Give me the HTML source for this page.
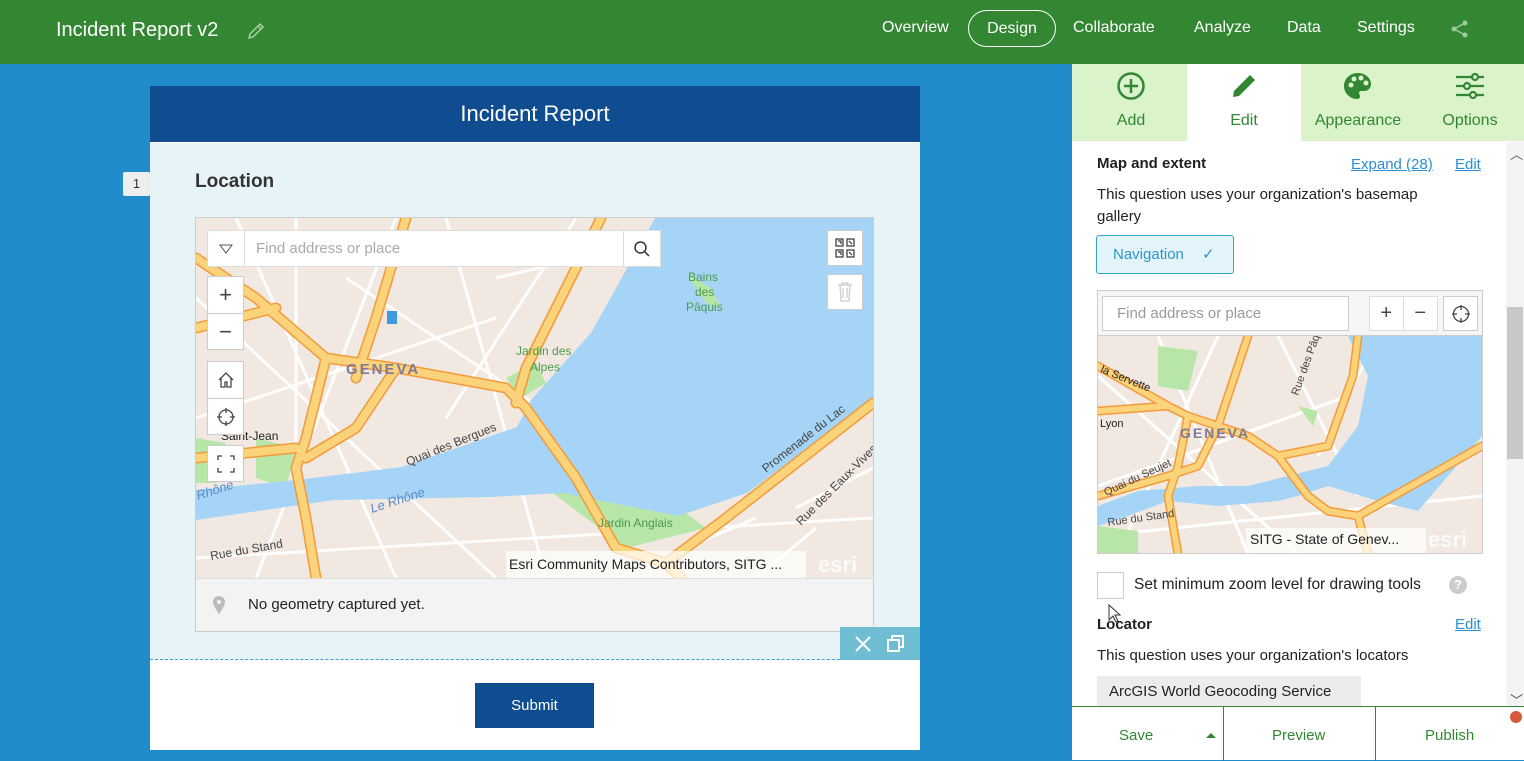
<!DOCTYPE html>
<html><head><meta charset="utf-8">
<style>
*{box-sizing:border-box;margin:0;padding:0}
body{width:1524px;height:760px;overflow:hidden;font-family:"Liberation Sans",sans-serif;background:#208cca;position:relative}
.abs{position:absolute}
.top{left:0;top:0;width:1524px;height:64px;background:#338732;color:#fff}
.nav{font-size:16px;top:19px;color:#fff}
.card{left:150px;top:86px;width:770px;height:664px;background:#fff}
.fh{left:0;top:0;width:770px;height:56px;background:#0f4c90;color:#fff;font-size:22px;text-align:center;line-height:56px}
.fb{left:0;top:57px;width:770px;height:517px;background:#e7f4f7;border-bottom:1px dashed #3aa0d0}
.btn{background:#fff;border:1px solid #ccc;width:37px;height:37px;display:flex;align-items:center;justify-content:center}
.panel{left:1072px;top:64px;width:452px;height:696px;background:#fff}
.tab{top:0;height:77px;width:114px;text-align:center;color:#338732;font-size:16px}
.tab span{position:absolute;left:0;right:0;top:48px}
.lnk{color:#2b8ed0;text-decoration:underline;font-size:15px}
.t15{font-size:15px;color:#222}
</style></head><body>
<div class="abs top">
 <div class="abs" style="left:56px;top:19px;font-size:20px">Incident Report v2</div>
 <svg class="abs" style="left:246px;top:21px" width="20" height="20" viewBox="0 0 20 20"><path d="M3 17l1-4L14 3l3 3L7 16z M12 5l3 3" fill="none" stroke="#a8cfa8" stroke-width="1.5"/></svg>
 <div class="abs nav" style="left:882px">Overview</div>
 <div class="abs" style="left:968px;top:10px;width:88px;height:37px;border:1px solid #fff;border-radius:19px;text-align:center;line-height:35px;font-size:16px">Design</div>
 <div class="abs nav" style="left:1073px">Collaborate</div>
 <div class="abs nav" style="left:1194px">Analyze</div>
 <div class="abs nav" style="left:1287px">Data</div>
 <div class="abs nav" style="left:1357px">Settings</div>
 <svg class="abs" style="left:1450px;top:19px" width="20" height="20" viewBox="0 0 20 20" fill="#9fc99f"><circle cx="15" cy="4" r="2.5"/><circle cx="4" cy="10" r="2.5"/><circle cx="15" cy="16" r="2.5"/><path d="M4 10L15 4M4 10l11 6" stroke="#9fc99f" stroke-width="1.5"/></svg>
</div>

<div class="abs" style="left:123px;top:172px;width:27px;height:24px;background:#eee;border-radius:2px;font-size:13px;text-align:center;line-height:24px;color:#333">1</div>
<div class="abs card">
 <div class="abs fh">Incident Report</div>
 <div class="abs fb">
  <div class="abs" style="left:45px;top:28px;font-size:19px;color:#333;font-weight:bold">Location</div>
  <div class="abs" style="left:45px;top:74px;width:679px;height:415px;border:1px solid #ccc;background:#f5f5f5">
   <svg class="abs" style="left:0;top:0" width="677" height="360" viewBox="0 0 677 360">
    <rect width="677" height="360" fill="#f1e9e1"/>
    <g stroke="#fff" stroke-width="3" fill="none" opacity=".9">
     <path d="M0 80L300 360M40 0L200 360M100 0L100 250M150 60L450 260M250 0L350 360M0 200L300 100M200 0L60 360M380 0L250 200M0 340L677 300M500 0L420 150M560 300L420 360M600 290L677 250M620 310L560 360M300 60L470 20"/>
    </g>
    <path d="M310 160l30 -15 10 20-25 15z M480 60l20 10-20 15zM0 220l30 5-10 40-20 0zM60 220l40 10-10 40-30-10zM350 270l120 10 40 30-80 20z" fill="#b8e6a8"/>
    <path d="M459 0L677 0 677 182 551 275 482 298 367 275 294 279 138 282 0 302 0 272 100 262 206 249 321 209 335 182 395 115z" fill="#a5d4f7"/>
    <path d="M490 55l25 15 10 20-15-5z" fill="#b8e6a8"/>
    <g fill="none" stroke-linecap="round" stroke-linejoin="round">
     <g stroke="#f39a3a" stroke-width="11"><path d="M0 40L60 80 130 140 200 150 310 170 330 190 380 260 420 330 470 345 530 300 677 185"/><path d="M130 140L110 220 100 250 110 300 120 360"/><path d="M200 150L160 210 110 240"/><path d="M0 240L100 230"/><path d="M210 0L180 100 160 160"/><path d="M405 0L330 150 320 185"/><path d="M470 345L485 360"/><path d="M0 110L80 90"/></g>
     <g stroke="#fbd37a" stroke-width="8"><path d="M0 40L60 80 130 140 200 150 310 170 330 190 380 260 420 330 470 345 530 300 677 185"/><path d="M130 140L110 220 100 250 110 300 120 360"/><path d="M200 150L160 210 110 240"/><path d="M0 240L100 230"/><path d="M210 0L180 100 160 160"/><path d="M405 0L330 150 320 185"/><path d="M470 345L485 360"/><path d="M0 110L80 90"/></g>
    </g>
    <text x="150" y="156" font-family="Liberation Sans" font-weight="bold" font-size="15" fill="#7f7a96" letter-spacing="2">GENEVA</text>
    <text x="320" y="137" font-family="Liberation Sans" font-size="12" fill="#4c9a4c">Jardin des</text>
    <text x="334" y="153" font-family="Liberation Sans" font-size="12" fill="#4c9a4c">Alpes</text>
    <text x="492" y="63" font-family="Liberation Sans" font-size="12" fill="#4c9a4c">Bains</text>
    <text x="499" y="78" font-family="Liberation Sans" font-size="12" fill="#4c9a4c">des</text>
    <text x="490" y="93" font-family="Liberation Sans" font-size="12" fill="#4c9a4c">Pâquis</text>
    <text x="402" y="309" font-family="Liberation Sans" font-size="12" fill="#4c9a4c">Jardin Anglais</text>
    <text x="0" y="0" font-family="Liberation Sans" font-size="12" fill="#444" transform="translate(212 248) rotate(-22)">Quai des Bergues</text>
    <text x="0" y="0" font-family="Liberation Sans" font-size="12" fill="#444" transform="translate(570 255) rotate(-38)">Promenade du Lac</text>
    <text x="0" y="0" font-family="Liberation Sans" font-size="12" fill="#444" transform="translate(605 308) rotate(-45)">Rue des Eaux-Vives</text>
    <text x="0" y="0" font-family="Liberation Sans" font-size="13" fill="#5a8bc8" font-style="italic" transform="translate(176 295) rotate(-18)">Le Rhône</text>
    <text x="0" y="0" font-family="Liberation Sans" font-size="13" fill="#5a8bc8" font-style="italic" transform="translate(2 282) rotate(-18)">Rhône</text>
    <text x="0" y="0" font-family="Liberation Sans" font-size="12" fill="#444" transform="translate(15 342) rotate(-10)">Rue du Stand</text>
    <text x="25" y="222" font-family="Liberation Sans" font-size="12" fill="#222">Saint-Jean</text>
    <rect x="191" y="93" width="10" height="13" fill="#3b9ae0"/>
    <rect x="310" y="333" width="300" height="27" fill="#fff" opacity=".7"/>
    <text x="313" y="351" font-family="Liberation Sans" font-size="14" fill="#222">Esri Community Maps Contributors, SITG ...</text>
    <text x="622" y="354" font-family="Liberation Sans" font-weight="bold" font-size="22" fill="#fff" opacity=".8">esri</text>
   </svg>
   <div class="abs" style="left:11px;top:12px;width:454px;height:37px;background:#fff;border:1px solid #ddd;display:flex">
    <div style="width:37px;border-right:1px solid #ddd;display:flex;align-items:center;justify-content:center"><svg width="14" height="10"><path d="M1 1h12L7 9z" fill="none" stroke="#555"/></svg></div>
    <div style="flex:1;color:#aaa;font-size:15px;padding:9px 11px">Find address or place</div>
    <div style="width:37px;border-left:1px solid #ddd;display:flex;align-items:center;justify-content:center"><svg width="18" height="18"><circle cx="7.5" cy="7.5" r="5.5" fill="none" stroke="#333" stroke-width="1.5"/><path d="M11.5 11.5L16 16" stroke="#333" stroke-width="1.5"/></svg></div>
   </div>
   <div class="abs btn" style="left:11px;top:58px;border-bottom:none;font-size:22px;color:#444">+</div>
   <div class="abs btn" style="left:11px;top:95px;font-size:22px;color:#444">−</div>
   <div class="abs btn" style="left:11px;top:143px;border-bottom:none"><svg width="20" height="20"><path d="M3 10L10 3l7 7M5 8v9h4v-5h2v5h4V8" fill="none" stroke="#444" stroke-width="1.3"/></svg></div>
   <div class="abs btn" style="left:11px;top:180px"><svg width="20" height="20"><circle cx="10" cy="10" r="7" fill="none" stroke="#444" stroke-width="1.3"/><path d="M10 1v5M10 14v5M1 10h5M14 10h5" stroke="#444" stroke-width="1.3"/></svg></div>
   <div class="abs btn" style="left:11px;top:227px"><svg width="18" height="18"><path d="M1 5V1h4M13 1h4v4M17 13v4h-4M5 17H1v-4" fill="none" stroke="#444" stroke-width="1.3"/></svg></div>
   <div class="abs btn" style="left:631px;top:12px;width:36px;height:36px"><svg width="20" height="20" fill="none" stroke="#333" stroke-width="1.2"><rect x="1" y="1" width="7" height="7"/><rect x="12" y="1" width="7" height="7"/><rect x="1" y="12" width="7" height="7"/><rect x="12" y="12" width="7" height="7"/><path d="M3 3h3v3M14 14l3 3M14 3l3 3M3 14h3v3"/></svg></div>
   <div class="abs btn" style="left:631px;top:56px;width:36px;height:36px"><svg width="16" height="20" fill="none" stroke="#ccc" stroke-width="1.3"><path d="M1 3h14M5 3V1h6v2M3 3l1 16h8l1-16M6 6v10M10 6v10"/></svg></div>
   <div class="abs" style="left:0;top:360px;width:677px;height:53px;border-top:1px solid #ddd;background:#f3f3f3">
    <svg class="abs" style="left:16px;top:16px" width="14" height="20"><path d="M7 1a6 6 0 0 1 6 6c0 4-6 12-6 12S1 11 1 7a6 6 0 0 1 6-6z" fill="#bbb"/><circle cx="7" cy="7" r="2" fill="#f3f3f3"/></svg>
    <div class="abs" style="left:52px;top:17px;font-size:15px;color:#222">No geometry captured yet.</div>
   </div>
  </div>
  <div class="abs" style="left:690px;top:484px;width:80px;height:33px;background:#6fbdd2">
   <svg class="abs" style="left:14px;top:8px" width="18" height="18"><path d="M2 2l14 14M16 2L2 16" stroke="#fff" stroke-width="2"/></svg>
   <svg class="abs" style="left:46px;top:7px" width="20" height="20" fill="none" stroke="#fff" stroke-width="2"><rect x="2" y="6" width="11" height="11"/><path d="M6 6V2h11v11h-4"/></svg>
  </div>
 </div>
 <div class="abs" style="left:325px;top:597px;width:119px;height:45px;background:#0f4c90;color:#fff;font-size:15px;text-align:center;line-height:45px">Submit</div>
</div>

<div class="abs panel">
 <div class="abs" style="left:0;top:0;width:452px;height:77px;background:#daf3cb"></div>
 <div class="abs tab" style="left:2px"><svg class="abs" style="left:42px;top:7px" width="30" height="30"><circle cx="15" cy="15" r="12.5" fill="none" stroke="#338732" stroke-width="2.5"/><path d="M15 8v14M8 15h14" stroke="#338732" stroke-width="2.5"/></svg><span>Add</span></div>
 <div class="abs tab" style="left:115px;background:#fff"><svg class="abs" style="left:41px;top:6px" width="32" height="32"><path d="M5 27l1-6L22 5l5 5-16 16z" fill="#338732"/></svg><span>Edit</span></div>
 <div class="abs tab" style="left:229px"><svg class="abs" style="left:42px;top:7px" width="30" height="30"><path d="M15 2C7 2 1 8 1 15s6 13 13 13c2 0 3-1 3-3 0-1-1-2-1-3s1-2 2-2h3c4 0 7-3 7-7C28 7 22 2 15 2z" fill="#338732"/><circle cx="8" cy="14" r="2.5" fill="#daf3cb"/><circle cx="11" cy="8" r="2.5" fill="#daf3cb"/><circle cx="18" cy="7" r="2.5" fill="#daf3cb"/><circle cx="23" cy="12" r="2.5" fill="#daf3cb"/></svg><span>Appearance</span></div>
 <div class="abs tab" style="left:341px"><svg class="abs" style="left:42px;top:8px" width="30" height="28" fill="none" stroke="#338732" stroke-width="2.2"><path d="M1 5h28M1 14h28M1 23h28"/><circle cx="20" cy="5" r="3" fill="#daf3cb"/><circle cx="12" cy="14" r="3" fill="#daf3cb"/><circle cx="18" cy="23" r="3" fill="#daf3cb"/></svg><span>Options</span></div>

 <div class="abs" style="left:25px;top:91px;font-size:15px;font-weight:bold;color:#222">Map and extent</div>
 <div class="abs lnk" style="left:279px;top:92px">Expand (28)</div>
 <div class="abs lnk" style="left:383px;top:92px">Edit</div>
 <div class="abs t15" style="left:25px;top:120px;line-height:22px;width:345px">This question uses your organization's basemap gallery</div>
 <div class="abs" style="left:24px;top:171px;width:138px;height:39px;border:1px solid #3aa0cd;border-radius:3px;background:#e3f5fb;color:#2f95c8;font-size:15px;line-height:37px;padding-left:16px">Navigation <span style="margin-left:14px">✓</span></div>

 <div class="abs" style="left:25px;top:226px;width:386px;height:264px;border:1px solid #ccc;background:#fff;overflow:hidden">
  <svg class="abs" style="left:0;top:45px" width="384" height="218" viewBox="0 0 384 218">
   <rect width="384" height="218" fill="#f1e9e1"/>
   <g stroke="#fff" stroke-width="3" fill="none"><path d="M0 40L200 218M60 0L150 218M120 0L20 218M0 150L250 60M180 0L260 160M0 200L384 160M280 0L220 120"/></g>
   <path d="M60 10l40 5-10 40-30-5zM200 70l20 5-5 15zM0 190l40 5 0 23-40 0z" fill="#b8e6a8"/>
   <path d="M250 0L384 0 384 100 320 175 280 165 230 150 200 160 180 165 120 170 70 165 30 180 0 190 0 170 40 155 100 150 150 150 190 140 230 130 260 90 270 40z" fill="#a5d4f7"/>
   <g fill="none" stroke-linecap="round" stroke-linejoin="round">
    <g stroke="#f39a3a" stroke-width="9"><path d="M0 30L70 70 90 80 120 90 150 100 180 120 210 160 230 175 260 180 384 110"/><path d="M90 80L80 130 70 160 80 218"/><path d="M120 90L100 130 70 140 0 160"/><path d="M150 0L130 60 120 90"/><path d="M260 0L255 40 230 110 180 120"/><path d="M0 75L70 70"/><path d="M260 180l10 38"/></g>
    <g stroke="#fbd37a" stroke-width="6"><path d="M0 30L70 70 90 80 120 90 150 100 180 120 210 160 230 175 260 180 384 110"/><path d="M90 80L80 130 70 160 80 218"/><path d="M120 90L100 130 70 140 0 160"/><path d="M150 0L130 60 120 90"/><path d="M260 0L255 40 230 110 180 120"/><path d="M0 75L70 70"/><path d="M260 180l10 38"/></g>
   </g>
   <text x="82" y="102" font-family="Liberation Sans" font-weight="bold" font-size="14" fill="#7f7a96" letter-spacing="2">GENEVA</text>
   <text x="2" y="91" font-family="Liberation Sans" font-size="11" fill="#222">Lyon</text>
   <text x="0" y="0" font-family="Liberation Sans" font-size="11" fill="#222" transform="translate(2 36) rotate(22)">la Servette</text>
   <text x="0" y="0" font-family="Liberation Sans" font-size="11" fill="#444" transform="translate(10 190) rotate(-8)">Rue du Stand</text>
   <text x="0" y="0" font-family="Liberation Sans" font-size="11" fill="#444" transform="translate(8 160) rotate(-25)">Quai du Seujet</text>
   <text x="0" y="0" font-family="Liberation Sans" font-size="11" fill="#444" transform="translate(200 60) rotate(-70)">Rue des Pâquis</text>
   <rect x="148" y="192" width="180" height="26" fill="#fff" opacity=".7"/>
   <text x="152" y="208" font-family="Liberation Sans" font-size="14" fill="#222">SITG - State of Genev...</text>
   <text x="330" y="211" font-family="Liberation Sans" font-weight="bold" font-size="22" fill="#fff" opacity=".8">esri</text>
  </svg>
  <div class="abs" style="left:0;top:0;width:384px;height:45px;background:#f6f6f6;border-bottom:1px solid #ccc"></div>
  <div class="abs" style="left:4px;top:5px;width:247px;height:35px;background:#fff;border:1px solid #ccc;color:#999;font-size:15px;padding:8px 14px">Find address or place</div>
  <div class="abs" style="left:271px;top:5px;width:69px;height:35px;background:#fff;border:1px solid #ddd;display:flex;font-size:20px;color:#444"><div style="width:34px;text-align:center;line-height:33px;border-right:1px solid #ddd">+</div><div style="width:34px;text-align:center;line-height:33px">−</div></div>
  <div class="abs" style="left:345px;top:5px;width:35px;height:35px;background:#fff;border:1px solid #ccc"><svg class="abs" style="left:7px;top:7px" width="20" height="20"><circle cx="10" cy="10" r="7.5" fill="none" stroke="#444" stroke-width="1.3"/><path d="M10 1v5M10 14v5M1 10h5M14 10h5" stroke="#444" stroke-width="1.3"/></svg></div>
 </div>

 <div class="abs" style="left:25px;top:508px;width:27px;height:27px;border:1px solid #ccc;background:#fff"></div>
 <div class="abs t15" style="left:62px;top:512px;font-size:15.5px">Set minimum zoom level for drawing tools</div>
 <div class="abs" style="left:377px;top:512px;width:18px;height:18px;border-radius:50%;background:#ccc;color:#fff;font-size:13px;font-weight:bold;text-align:center;line-height:18px">?</div>
 <svg class="abs" style="left:36px;top:540px" width="14" height="20"><path d="M1 1v15l4-4 3 6 2-1-3-6h5z" fill="#fff" stroke="#333" stroke-width="1"/></svg>
 <div class="abs" style="left:25px;top:552px;font-size:15px;font-weight:bold;color:#222">Locator</div>
 <div class="abs lnk" style="left:383px;top:552px">Edit</div>
 <div class="abs t15" style="left:25px;top:583px">This question uses your organization's locators</div>
 <div class="abs t15" style="left:25px;top:612px;width:264px;height:30px;background:#ececec;padding:7px 12px">ArcGIS World Geocoding Service</div>

 <div class="abs" style="left:434px;top:78px;width:18px;height:566px;background:#f4f4f4"></div>
 <div class="abs" style="left:435px;top:243px;width:16px;height:152px;background:#c8c8c8"></div>
 <div class="abs" style="left:438px;top:80px;font-size:13px;color:#555">︿</div>
 <div class="abs" style="left:438px;top:626px;font-size:13px;color:#555">﹀</div>

 <div class="abs" style="left:0;top:642px;width:452px;height:54px;background:#fff;border-top:1.5px solid #338732;color:#338732;font-size:15px">
  <div class="abs" style="left:47px;top:20px">Save</div>
  <svg class="abs" style="left:134px;top:25px" width="10" height="6"><path d="M0 6l5-5 5 5z" fill="#338732"/></svg>
  <div class="abs" style="left:151px;top:0;width:1px;height:54px;background:#338732"></div>
  <div class="abs" style="left:200px;top:20px">Preview</div>
  <div class="abs" style="left:303px;top:0;width:1px;height:54px;background:#338732"></div>
  <div class="abs" style="left:353px;top:20px">Publish</div>
  <div class="abs" style="left:438px;top:4px;width:12px;height:12px;border-radius:50%;background:#d9583b"></div>
 </div>
</div>
</body></html>
